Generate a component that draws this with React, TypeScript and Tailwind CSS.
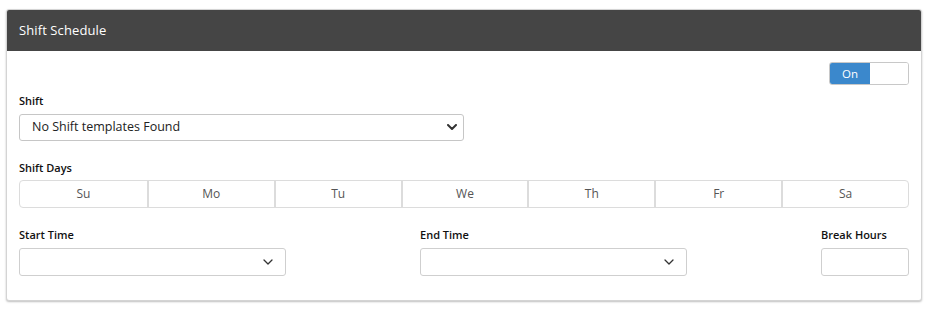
import React from 'react';

const days = ['Su', 'Mo', 'Tu', 'We', 'Th', 'Fr', 'Sa'];

const Chevron = ({ bold }: { bold?: boolean }) => (
  <svg width="10" height="6" viewBox="0 0 10 6" fill="none">
    <path
      d="M1 1l4 4 4-4"
      stroke="#333"
      strokeWidth={bold ? 2 : 1.3}
      strokeLinecap="round"
      strokeLinejoin="round"
    />
  </svg>
);

const App = () => {
  return (
    <div className="w-[929px] h-[312px] bg-white pt-[9px] px-[6px] font-['Open_Sans',sans-serif]">
      <div className="w-[916px] border border-[#d4d4d4] rounded-[3px] shadow-[0_1px_2px_rgba(0,0,0,0.25)] bg-white">
        {/* header */}
        <div className="h-[41px] bg-[#454545] rounded-t-[2px] flex items-center px-[12px]">
          <h2 className="text-white text-[13px] font-medium tracking-[0.1px]">Shift Schedule</h2>
        </div>

        <div className="px-[12px] pt-[11px] pb-[24px]">
          {/* toggle */}
          <div className="flex justify-end">
            <div className="w-[80px] h-[23px] border border-[#c8c8c8] rounded-[3px] flex overflow-hidden">
              <div className="w-[40px] bg-[#3b88cc] text-white text-[11.5px] flex items-center justify-center">
                On
              </div>
              <div className="flex-1 bg-white" />
            </div>
          </div>

          {/* shift */}
          <label className="block mt-[8px] text-[11px] font-semibold text-[#111]">Shift</label>
          <div className="mt-[4px] w-1/2 h-[27px] border border-[#c6c6c6] rounded-[3px] flex items-center justify-between pl-[12px] pr-[6px]">
            <span className="text-[12.5px] text-[#222]">No Shift templates Found</span>
            <Chevron bold />
          </div>

          {/* shift days */}
          <label className="block mt-[19px] text-[11px] font-semibold text-[#111]">Shift Days</label>
          <div className="mt-[4px] h-[28px] border border-[#dcdcdc] rounded-[4px] grid grid-cols-7">
            {days.map((d, i) => (
              <div
                key={d}
                className={`flex items-center justify-center text-[12px] text-[#555] ${i > 0 ? 'border-l-[2px] border-[#dcdcdc]' : ''}`}
              >
                {d}
              </div>
            ))}
          </div>

          {/* times */}
          <div className="mt-[19px] flex justify-between">
            <div className="w-[267px]">
              <label className="block text-[11px] font-semibold text-[#111]">Start Time</label>
              <div className="mt-[4px] h-[28px] border border-[#cfcfcf] rounded-[3px] flex items-center justify-end pr-[12px]">
                <Chevron />
              </div>
            </div>
            <div className="w-[267px]">
              <label className="block text-[11px] font-semibold text-[#111]">End Time</label>
              <div className="mt-[4px] h-[28px] border border-[#cfcfcf] rounded-[3px] flex items-center justify-end pr-[12px]">
                <Chevron />
              </div>
            </div>
            <div className="w-[88px]">
              <label className="block text-[11px] font-semibold text-[#111]">Break Hours</label>
              <div className="mt-[4px] h-[28px] border border-[#cfcfcf] rounded-[3px]" />
            </div>
          </div>
        </div>
      </div>
    </div>
  );
};

export default App;
